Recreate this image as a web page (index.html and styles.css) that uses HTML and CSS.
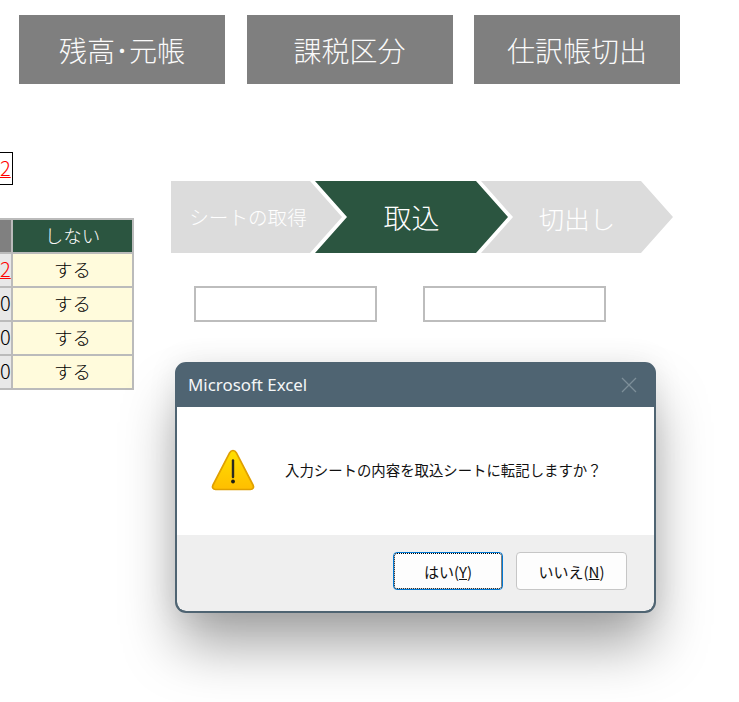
FILE: index.html
```html
<!DOCTYPE html>
<html lang="ja">
<head>
    <meta charset="UTF-8">
    <meta name="viewport" content="width=device-width, initial-scale=1.0">
    <title>Microsoft Excel</title>
    <link rel="stylesheet" href="styles.css">
</head>
<body>
    <div class="top-menu">
        <div class="menu-button">残高･元帳</div>
        <div class="menu-button">課税区分</div>
        <div class="menu-button">仕訳帳切出</div>
    </div>

    <div class="sheet">
        <div class="sheet-left">
            <div class="count-box"><span class="red">2</span></div>
            <div class="grid-table">
                <div class="head-gray"></div>
                <div class="head-green">しない</div>
                <div class="num"><span class="red">2</span></div>
                <div class="val">する</div>
                <div class="num">0</div>
                <div class="val">する</div>
                <div class="num">0</div>
                <div class="val">する</div>
                <div class="num">0</div>
                <div class="val">する</div>
            </div>
        </div>

        <div class="sheet-right">
            <div class="steps">
                <div class="step step-first">シートの取得</div>
                <div class="step step-active">取込</div>
                <div class="step step-last">切出し</div>
            </div>
            <div class="inputs">
                <div class="input-box"></div>
                <div class="input-box"></div>
            </div>
        </div>
    </div>

    <div class="dialog">
        <div class="dialog-title">
            <span>Microsoft Excel</span>
            <svg class="close-icon" width="16" height="16" viewBox="0 0 16 16">
                <path d="M1 1L15 15M15 1L1 15" stroke="#7d8f99" stroke-width="1.3" fill="none"/>
            </svg>
        </div>
        <div class="dialog-body">
            <svg class="warn-icon" width="44" height="44" viewBox="0 0 44 44">
                <defs>
                    <linearGradient id="warn-fill" x1="0" y1="0" x2="0" y2="1">
                        <stop offset="0" stop-color="#ffe000"/>
                        <stop offset="1" stop-color="#ffbe00"/>
                    </linearGradient>
                </defs>
                <path d="M22 2.5C23.6 2.5 24.6 3.4 25.4 4.9L42 37C43.2 39.4 42 41.5 39.4 41.5H4.6C2 41.5 .8 39.4 2 37L18.6 4.9C19.4 3.4 20.4 2.5 22 2.5Z" fill="url(#warn-fill)" stroke="#e0a000" stroke-width="1.7"/>
                <path d="M22 12.5V29" stroke="#2b2b20" stroke-width="2.4" stroke-linecap="round"/>
                <circle cx="22" cy="33.5" r="1.9" fill="#1d1d15"/>
            </svg>
            <div class="message">入力シートの内容を取込シートに転記しますか？</div>
        </div>
        <div class="dialog-footer">
            <div class="btn btn-focus"><span>はい(<u>Y</u>)</span></div>
            <div class="btn btn-no"><span>いいえ(<u>N</u>)</span></div>
        </div>
    </div>
</body>
</html>
```

FILE: styles.css
```css
body {
    font-family: "Noto Sans CJK JP", "Noto Sans", sans-serif;
    background-color: white;
    margin: 0;
    padding: 0;
}
.top-menu {
    display: flex;
    gap: 21.5px;
    padding: 15px 0 0 19px;
}
.menu-button {
    width: 206px;
    height: 69px;
    background: #7f7f7f;
    color: #fafafa;
    font-size: 28px;
    font-weight: 300;
    display: flex;
    align-items: center;
    justify-content: center;
}
.sheet {
    display: flex;
    margin-top: 68px;
}
.sheet-left {
    width: 134px;
    flex-shrink: 0;
}
.count-box {
    width: 12px;
    height: 31px;
    border: 1px solid black;
    border-left: none;
    font-size: 20px;
    font-weight: 300;
    line-height: 30px;
    text-align: right;
    margin-bottom: 33px;
    overflow: hidden;
}
.count-box span {
    margin-right: 6px;
}
.red {
    color: #ff0000;
    text-decoration: underline;
    text-decoration-thickness: 1px;
}
.grid-table {
    display: grid;
    grid-template-columns: 11px 119px;
    grid-auto-rows: 32px;
    gap: 2px;
    padding: 2px 2px 2px 0;
    background: #bbbbbb;
    font-size: 18.5px;
    font-weight: 300;
    line-height: 30px;
    text-align: center;
}
.head-gray {
    background: #808080;
}
.head-green {
    background: #2b5540;
    color: #fafafa;
}
.num {
    background: #e8e8e8;
    color: #000;
    font-size: 20px;
    text-align: right;
    padding-right: 5px;
    overflow: hidden;
}
.val {
    background: #fffbdc;
    color: #000;
}
.sheet-right {
    margin-left: 37px;
    padding-top: 29px;
}
.steps {
    display: flex;
}
.step {
    height: 72px;
    display: flex;
    align-items: center;
    justify-content: center;
    background: #dcdcdc;
    color: white;
    font-weight: 300;
}
.step-first {
    width: 171px;
    box-sizing: border-box;
    padding: 0 17px 2px 0;
    font-size: 19.6px;
    clip-path: polygon(0 0, 139px 0, 100% 50%, 139px 100%, 0 100%);
}
.step-active {
    width: 193px;
    margin-left: -27px;
    background: #2b5540;
    font-size: 28px;
    clip-path: polygon(0 0, 161px 0, 100% 50%, 161px 100%, 0 100%, 32px 50%);
}
.step-last {
    width: 192px;
    margin-left: -27px;
    font-size: 25.5px;
    clip-path: polygon(0 0, 160px 0, 100% 50%, 160px 100%, 0 100%, 32px 50%);
}
.inputs {
    display: flex;
    gap: 46px;
    margin-top: 33px;
    padding-left: 23px;
}
.input-box {
    width: 179px;
    height: 32px;
    border: 2px solid #bdbdbd;
    background: white;
}
.dialog {
    position: absolute;
    left: 175px;
    top: 362px;
    width: 481px;
    height: 251px;
    box-sizing: border-box;
    border: 2px solid #4f6472;
    border-radius: 11px;
    background: #4f6472;
    overflow: hidden;
    display: flex;
    flex-direction: column;
    box-shadow: 0 36px 56px -4px rgba(0,0,0,0.36), 0 0 30px rgba(0,0,0,0.08);
}
.dialog-title {
    height: 43px;
    background: #4f6472;
    color: #f4f6f7;
    font-family: "Noto Sans", sans-serif;
    font-size: 16.9px;
    display: flex;
    align-items: center;
    justify-content: space-between;
    padding: 0 17px 2px 11px;
    box-sizing: border-box;
}
.dialog-body {
    height: 128px;
    background: white;
    display: flex;
    align-items: center;
    padding-left: 34px;
    box-sizing: border-box;
}
.warn-icon {
    flex-shrink: 0;
    margin-bottom: 2px;
}
.message {
    margin-left: 30px;
    margin-bottom: 4px;
    font-size: 14.4px;
    color: #111;
}
.dialog-footer {
    flex: 1;
    background: #efefef;
    border-radius: 0 0 9px 9px;
    display: flex;
    justify-content: flex-end;
    gap: 13px;
    padding: 17px 27px 0 0;
}
.btn {
    width: 110px;
    height: 38px;
    box-sizing: border-box;
    border: 1px solid #c6c6c6;
    border-radius: 4px;
    background: #fdfdfd;
    font-size: 15px;
    color: #111;
    display: flex;
    align-items: center;
    justify-content: center;
}
.btn-no {
    width: 111px;
}
.btn-focus {
    border-color: #0078d4;
    outline: 1px dotted black;
    outline-offset: -2px;
}
```
